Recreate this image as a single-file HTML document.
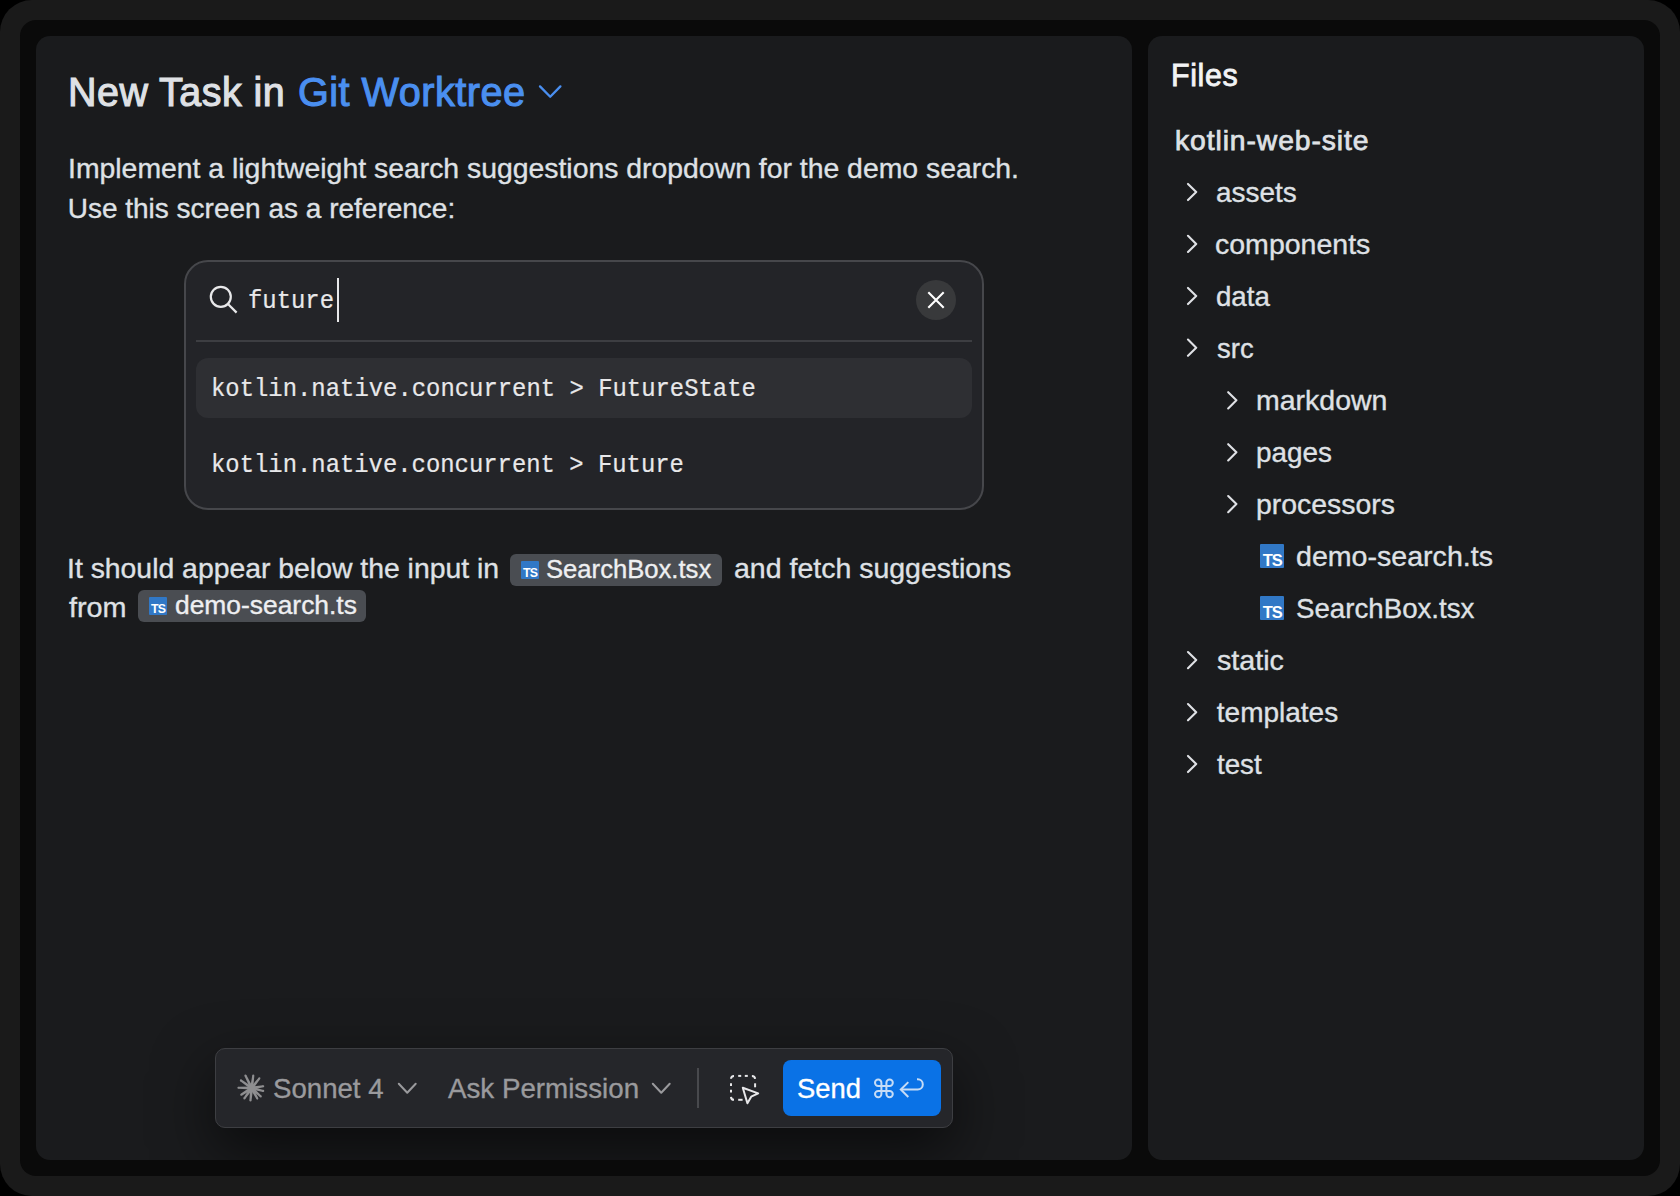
<!DOCTYPE html>
<html><head><meta charset="utf-8">
<style>
*{margin:0;padding:0;box-sizing:border-box}
html,body{width:1680px;height:1196px;overflow:hidden;background:#000}
body{position:relative;font-family:"Liberation Sans",sans-serif;color:#dfe1e5}
.a{position:absolute}
.t{position:absolute;line-height:1;white-space:pre;transform-origin:0 0}
.ts{position:absolute;background:#3178c6;border-radius:1px;overflow:hidden}
.ts span{position:absolute;font-weight:bold;color:#fff;line-height:1;white-space:pre;transform-origin:0 0}
</style></head>
<body>
<div class="a" style="left:0;top:0;width:1680px;height:1196px;background:#1a1a1a;border-radius:32px"></div>
<div class="a" style="left:20px;top:20px;width:1640px;height:1156px;background:#0a0a0a;border-radius:16px"></div>
<div class="a" style="left:36px;top:36px;width:1096px;height:1124px;background:#1a1b1d;border-radius:14px;overflow:hidden"><div class="a" style="left:179px;top:1012px;width:738px;height:80px;border-radius:10px;box-shadow:0 22px 60px rgba(0,0,0,0.6)"></div></div>
<div class="a" style="left:1148px;top:36px;width:496px;height:1124px;background:#1a1b1d;border-radius:14px"></div>
<svg class="a" style="left:530px;top:78px" width="40" height="28" viewBox="0 0 40 28"><path d="M10 8.4 L20.2 18.7 L30.4 8.4" fill="none" stroke="#4a8ff0" stroke-width="2.3" stroke-linecap="round" stroke-linejoin="round"/></svg>
<div class="a" style="left:184px;top:260px;width:800px;height:250px;background:#232428;border:2px solid #46474b;border-radius:24px"></div>
<svg class="a" style="left:200px;top:276px" width="48" height="48" viewBox="0 0 48 48"><circle cx="20.8" cy="20.8" r="10" fill="none" stroke="#e8e8ea" stroke-width="2.2"/><path d="M28.2 28.2 L36.6 36.6" stroke="#e8e8ea" stroke-width="2.2"/></svg>
<div class="a" style="left:337px;top:278px;width:2.2px;height:44px;background:#e8e8ea"></div>
<div class="a" style="left:916px;top:280px;width:40px;height:40px;border-radius:20px;background:#38393b"></div>
<svg class="a" style="left:916px;top:280px" width="40" height="40" viewBox="0 0 40 40"><path d="M12.3 12.3 L27.7 27.7 M27.7 12.3 L12.3 27.7" stroke="#fff" stroke-width="2.1"/></svg>
<div class="a" style="left:196px;top:340px;width:776px;height:2px;background:#3d3e42"></div>
<div class="a" style="left:196px;top:358px;width:776px;height:60px;background:#2e2f33;border-radius:12px"></div>
<div class="a" style="left:510px;top:554px;width:212px;height:32px;background:#4a4d52;border-radius:6px"></div>
<div class="ts" style="left:521px;top:561px;width:18px;height:18px"><span style="left:2.00px;top:5.95px;font-size:12.38px;letter-spacing:-0.75px">TS</span></div>
<div class="a" style="left:138px;top:590px;width:228px;height:32px;background:#4a4d52;border-radius:6px"></div>
<div class="ts" style="left:149px;top:597px;width:18px;height:18px"><span style="left:2.00px;top:5.95px;font-size:12.38px;letter-spacing:-0.75px">TS</span></div>
<div class="a" style="left:215px;top:1048px;width:738px;height:80px;background:#25262a;border:1px solid #3d3e42;border-radius:10px"></div>
<svg class="a" style="left:222px;top:1060px" width="60" height="56" viewBox="0 0 60 56"><g fill="#8e8e90"><path d="M31.04 27.43 L24.35 15.05 L22.47 15.99 L28.36 28.77 Z"/><circle cx="23.41" cy="15.52" r="1.05"/><path d="M31.19 28.29 L32.31 15.65 L30.23 15.39 L28.21 27.91 Z"/><circle cx="31.27" cy="15.52" r="1.05"/><path d="M30.88 29.03 L38.22 18.96 L36.56 17.66 L28.52 27.17 Z"/><circle cx="37.39" cy="18.31" r="1.05"/><path d="M29.95 29.58 L41.41 27.21 L41.06 25.14 L29.45 26.62 Z"/><circle cx="41.23" cy="26.18" r="1.05"/><path d="M29.35 29.56 L40.99 31.92 L41.48 29.88 L30.05 26.64 Z"/><circle cx="41.23" cy="30.90" r="1.05"/><path d="M28.68 29.20 L38.08 37.26 L39.50 35.72 L30.72 27.00 Z"/><circle cx="38.79" cy="36.49" r="1.05"/><path d="M28.38 28.81 L34.37 39.08 L36.22 38.09 L31.02 27.39 Z"/><circle cx="35.29" cy="38.59" r="1.05"/><path d="M28.21 27.95 L27.43 40.40 L29.52 40.61 L31.19 28.25 Z"/><circle cx="28.48" cy="40.51" r="1.05"/><path d="M28.48 27.23 L21.50 37.80 L23.22 39.02 L30.92 28.97 Z"/><circle cx="22.36" cy="38.41" r="1.05"/><path d="M28.90 26.83 L18.65 33.85 L19.78 35.63 L30.50 29.37 Z"/><circle cx="19.21" cy="34.74" r="1.05"/><path d="M29.74 26.60 L16.45 26.70 L16.39 28.80 L29.66 29.60 Z"/><circle cx="16.42" cy="27.75" r="1.05"/><path d="M30.57 26.88 L19.47 19.55 L18.26 21.27 L28.83 29.32 Z"/><circle cx="18.86" cy="20.41" r="1.05"/><circle cx="29.69999999999999" cy="28.09999999999991" r="3.4"/></g></svg>
<svg class="a" style="left:394px;top:1079px" width="26.5" height="18.5" viewBox="0 0 26.5 18.5"><path d="M4.8 4.8 L13.25 13.7 L21.7 4.8" fill="none" stroke="#9a9a9d" stroke-width="2.0" stroke-linecap="round" stroke-linejoin="round"/></svg>
<svg class="a" style="left:648px;top:1079px" width="26.5" height="18.5" viewBox="0 0 26.5 18.5"><path d="M4.8 4.8 L13.25 13.7 L21.7 4.8" fill="none" stroke="#9a9a9d" stroke-width="2.0" stroke-linecap="round" stroke-linejoin="round"/></svg>
<div class="a" style="left:697px;top:1068px;width:2px;height:40px;background:#48494d"></div>
<svg class="a" style="left:722px;top:1066px" width="44" height="44" viewBox="0 0 44 44"><g fill="none" stroke="#e8e8ea" stroke-width="2" stroke-linejoin="round" stroke-linecap="butt"><path d="M9 12.8 A3 3 0 0 1 12 9.9"/><path d="M16.2 9.9 H19.2"/><path d="M22.8 9.9 H25.8"/><path d="M29.9 9.9 A3.2 3.2 0 0 1 33.1 12.9"/><path d="M9 17.3 V20.1"/><path d="M9 23.7 V26.5"/><path d="M9 30.9 A3 3 0 0 0 12 33.8"/><path d="M16.2 33.8 H20.6"/><path d="M33.1 17.3 V21.3"/><path d="M20.8 21.7 L36.2 27.4 L29.2 30.7 L25.4 37.2 Z"/></g></svg>
<div class="a" style="left:783px;top:1060px;width:158px;height:56px;background:#0a72e6;border-radius:8px"></div>
<svg class="a" style="left:866px;top:1070px" width="68" height="36" viewBox="0 0 68 36"><g fill="none" stroke="#c6dcf6" stroke-width="2"><path d="M15.4 24.1 V12.8 A3.2 3.2 0 1 0 12.2 16 H23.6 A3.2 3.2 0 1 0 20.4 12.8 V24.1 A3.2 3.2 0 1 0 23.6 20.9 H12.2 A3.2 3.2 0 1 0 15.4 24.1 Z"/><path d="M42.3 12.1 L34.8 19.5 L42.3 27"/><path d="M35 19.5 H51.7 A5.1 5.1 0 0 0 51.7 9.3 H51"/></g></svg>
<svg class="a" style="left:1148px;top:150px" width="120" height="650" viewBox="1148 150 120 650"><path d="M1188 183.9 L1196.2 192.0 L1188 200.1 M1188 235.8 L1196.2 243.9 L1188 252.0 M1188 287.9 L1196.2 296.0 L1188 304.1 M1188 339.6 L1196.2 347.7 L1188 355.8 M1188 652.0 L1196.2 660.1 L1188 668.2 M1188 704.1 L1196.2 712.2 L1188 720.3 M1188 755.9 L1196.2 764.0 L1188 772.1 M1228.2 392.2 L1236.4 400.3 L1228.2 408.4 M1228.2 444.2 L1236.4 452.3 L1228.2 460.4 M1228.2 496.0 L1236.4 504.1 L1228.2 512.2" fill="none" stroke="#dfe1e5" stroke-width="2.1" stroke-linecap="round" stroke-linejoin="round"/></svg>
<div class="ts" style="left:1260px;top:544px;width:24px;height:24px"><span style="left:2.67px;top:7.93px;font-size:16.50px;letter-spacing:-1.00px">TS</span></div>
<div class="ts" style="left:1260px;top:596px;width:24px;height:24px"><span style="left:2.67px;top:7.93px;font-size:16.50px;letter-spacing:-1.00px">TS</span></div>
<div class="t" style="left:68.08px;top:72.40px;font-size:41px;color:#dfe1e5;-webkit-text-stroke:1.10px currentColor;letter-spacing:0.50px;transform:scaleX(0.9622);">New Task in</div>
<div class="t" style="left:298.33px;top:72.40px;font-size:41px;color:#4a8ff0;-webkit-text-stroke:1.10px currentColor;letter-spacing:0.50px;transform:scaleX(0.9670);">Git Worktree</div>
<div class="t" style="left:67.67px;top:155.10px;font-size:28px;color:#dfe1e5;-webkit-text-stroke:0.35px currentColor;transform:scaleX(1.0133);">Implement a lightweight search suggestions dropdown for the demo search.</div>
<div class="t" style="left:67.70px;top:194.90px;font-size:28px;color:#dfe1e5;-webkit-text-stroke:0.35px currentColor;">Use this screen as a reference:</div>
<div class="t" style="left:248.28px;top:287.90px;font-size:26px;color:#e8e8ea;font-family:'Liberation Mono',monospace;-webkit-text-stroke:0.2px currentColor;transform:scaleX(0.9187);">future</div>
<div class="t" style="left:210.94px;top:375.70px;font-size:26px;color:#e8e8ea;font-family:'Liberation Mono',monospace;-webkit-text-stroke:0.2px currentColor;transform:scaleX(0.9190);">kotlin.native.concurrent &gt; FutureState</div>
<div class="t" style="left:210.94px;top:451.90px;font-size:26px;color:#e8e8ea;font-family:'Liberation Mono',monospace;-webkit-text-stroke:0.2px currentColor;transform:scaleX(0.9184);">kotlin.native.concurrent &gt; Future</div>
<div class="t" style="left:66.77px;top:554.90px;font-size:28px;color:#dfe1e5;-webkit-text-stroke:0.35px currentColor;transform:scaleX(1.0130);">It should appear below the input in</div>
<div class="t" style="left:545.98px;top:556.70px;font-size:25px;color:#eeeff1;-webkit-text-stroke:0.35px currentColor;transform:scaleX(1.0250);">SearchBox.tsx</div>
<div class="t" style="left:733.58px;top:554.90px;font-size:28px;color:#dfe1e5;-webkit-text-stroke:0.35px currentColor;transform:scaleX(1.0177);">and fetch suggestions</div>
<div class="t" style="left:68.80px;top:594.40px;font-size:28px;color:#dfe1e5;-webkit-text-stroke:0.35px currentColor;transform:scaleX(1.0273);">from</div>
<div class="t" style="left:174.60px;top:592.60px;font-size:25px;color:#eeeff1;-webkit-text-stroke:0.35px currentColor;transform:scaleX(1.0558);">demo-search.ts</div>
<div class="t" style="left:273.21px;top:1074.90px;font-size:28px;color:#9a9a9d;-webkit-text-stroke:0.35px currentColor;transform:scaleX(0.9865);">Sonnet 4</div>
<div class="t" style="left:448.20px;top:1074.90px;font-size:28px;color:#9a9a9d;-webkit-text-stroke:0.35px currentColor;transform:scaleX(0.9906);">Ask Permission</div>
<div class="t" style="left:797.32px;top:1074.90px;font-size:28px;color:#ffffff;-webkit-text-stroke:0.35px currentColor;transform:scaleX(0.9778);">Send</div>
<div class="t" style="left:1171.24px;top:60.40px;font-size:31px;color:#f2f3f5;-webkit-text-stroke:0.83px currentColor;letter-spacing:0.60px;transform:scaleX(0.9818);">Files</div>
<div class="t" style="left:1175.49px;top:127.20px;font-size:28px;color:#dfe1e5;-webkit-text-stroke:0.75px currentColor;letter-spacing:0.90px;transform:scaleX(1.0100);">kotlin-web-site</div>
<div class="t" style="left:1215.50px;top:178.80px;font-size:28px;color:#dfe1e5;-webkit-text-stroke:0.35px currentColor;transform:scaleX(0.9975);">assets</div>
<div class="t" style="left:1215.48px;top:230.70px;font-size:28px;color:#dfe1e5;-webkit-text-stroke:0.35px currentColor;transform:scaleX(1.0185);">components</div>
<div class="t" style="left:1215.51px;top:282.80px;font-size:28px;color:#dfe1e5;-webkit-text-stroke:0.35px currentColor;transform:scaleX(0.9870);">data</div>
<div class="t" style="left:1216.80px;top:334.50px;font-size:28px;color:#dfe1e5;-webkit-text-stroke:0.35px currentColor;transform:scaleX(0.9811);">src</div>
<div class="t" style="left:1255.98px;top:387.10px;font-size:28px;color:#dfe1e5;-webkit-text-stroke:0.35px currentColor;transform:scaleX(1.0173);">markdown</div>
<div class="t" style="left:1256.01px;top:439.10px;font-size:28px;color:#dfe1e5;-webkit-text-stroke:0.35px currentColor;transform:scaleX(0.9947);">pages</div>
<div class="t" style="left:1255.99px;top:490.90px;font-size:28px;color:#dfe1e5;-webkit-text-stroke:0.35px currentColor;transform:scaleX(1.0147);">processors</div>
<div class="t" style="left:1295.88px;top:542.70px;font-size:28px;color:#dfe1e5;-webkit-text-stroke:0.35px currentColor;transform:scaleX(1.0208);">demo-search.ts</div>
<div class="t" style="left:1295.91px;top:594.60px;font-size:28px;color:#dfe1e5;-webkit-text-stroke:0.35px currentColor;transform:scaleX(0.9883);">SearchBox.tsx</div>
<div class="t" style="left:1216.80px;top:646.90px;font-size:28px;color:#dfe1e5;-webkit-text-stroke:0.35px currentColor;transform:scaleX(1.0246);">static</div>
<div class="t" style="left:1216.80px;top:699.00px;font-size:28px;color:#dfe1e5;-webkit-text-stroke:0.35px currentColor;">templates</div>
<div class="t" style="left:1216.80px;top:750.80px;font-size:28px;color:#dfe1e5;-webkit-text-stroke:0.35px currentColor;transform:scaleX(0.9891);">test</div>
</body></html>
